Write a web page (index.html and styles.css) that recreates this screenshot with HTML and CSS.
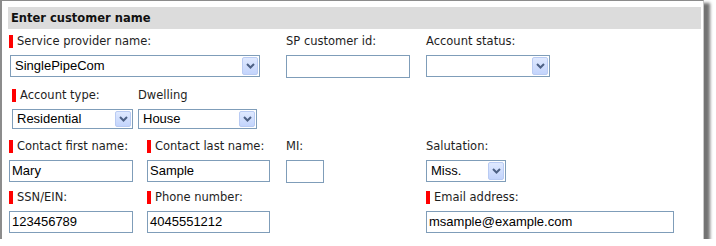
FILE: index.html
```html
<!doctype html>
<html lang="en">
  <head>
    <meta charset="UTF-8" />
    <title>Enter customer name</title>
    <link rel="stylesheet" href="styles.css">
  </head>
  <body>
    <div class="frame">
      <div class="section-title">Enter customer name</div>

      <div class="row row-first">
        <div class="field span-2">
          <div class="label"><span class="req"></span>Service provider name:</div>
          <div class="select w-250 nudge">
            <span class="value">SinglePipeCom</span>
            <span class="arrow"><svg width="9" height="6" viewBox="0 0 9 6"><path d="M1 1 L4.5 4.5 L8 1" fill="none" stroke="#4d6185" stroke-width="2"/></svg></span>
          </div>
        </div>
        <div class="field">
          <div class="label">SP customer id:</div>
          <div class="input w-124 tall"></div>
        </div>
        <div class="field">
          <div class="label">Account status:</div>
          <div class="select w-124">
            <span class="value"></span>
            <span class="arrow"><svg width="9" height="6" viewBox="0 0 9 6"><path d="M1 1 L4.5 4.5 L8 1" fill="none" stroke="#4d6185" stroke-width="2"/></svg></span>
          </div>
        </div>
      </div>

      <div class="row row-nested">
        <div class="field">
          <div class="label"><span class="req"></span>Account type:</div>
          <div class="select w-121 short">
            <span class="value">Residential</span>
            <span class="arrow"><svg width="9" height="6" viewBox="0 0 9 6"><path d="M1 1 L4.5 4.5 L8 1" fill="none" stroke="#4d6185" stroke-width="2"/></svg></span>
          </div>
        </div>
        <div class="field">
          <div class="label">Dwelling</div>
          <div class="select w-119 short">
            <span class="value">House</span>
            <span class="arrow"><svg width="9" height="6" viewBox="0 0 9 6"><path d="M1 1 L4.5 4.5 L8 1" fill="none" stroke="#4d6185" stroke-width="2"/></svg></span>
          </div>
        </div>
      </div>

      <div class="row">
        <div class="field">
          <div class="label"><span class="req"></span>Contact first name:</div>
          <div class="input w-124">Mary</div>
        </div>
        <div class="field">
          <div class="label"><span class="req"></span>Contact last name:</div>
          <div class="input w-123">Sample</div>
        </div>
        <div class="field">
          <div class="label">MI:</div>
          <div class="input w-38 tall"></div>
        </div>
        <div class="field">
          <div class="label">Salutation:</div>
          <div class="select w-80">
            <span class="value">Miss.</span>
            <span class="arrow"><svg width="9" height="6" viewBox="0 0 9 6"><path d="M1 1 L4.5 4.5 L8 1" fill="none" stroke="#4d6185" stroke-width="2"/></svg></span>
          </div>
        </div>
      </div>

      <div class="row">
        <div class="field">
          <div class="label"><span class="req"></span>SSN/EIN:</div>
          <div class="input w-124">123456789</div>
        </div>
        <div class="field">
          <div class="label"><span class="req"></span>Phone number:</div>
          <div class="input w-123">4045551212</div>
        </div>
        <div class="field"></div>
        <div class="field">
          <div class="label"><span class="req"></span>Email address:</div>
          <div class="input w-248">msample@example.com</div>
        </div>
      </div>

      <div class="torn"></div>
    </div>
  </body>
</html>
```

FILE: styles.css
```css
:root {
  --frame-border: #8c8c8c;
  --title-bg: #dcdcdc;
  --field-border: #7f9db9;
  --label-color: #1e1e1e;
  --required: #ff0000;
}

* {
  box-sizing: border-box;
  margin: 0;
  padding: 0;
}

body {
  background-color: #fff;
  font-family: "DejaVu Sans", Verdana, sans-serif;
}

.frame {
  width: 704px;
  height: 239px;
  padding: 6px 2px 0 6px;
  border-top: 1px solid var(--frame-border);
  border-left: 2px solid var(--frame-border);
  border-right: 1px solid #c8c8c8;
  box-shadow: 6px 3px 3px rgba(0, 0, 0, 0.55);
  background-color: #fff;
}

.section-title {
  height: 22px;
  padding-left: 3px;
  background-color: var(--title-bg);
  font-size: 11.5px;
  font-weight: bold;
  line-height: 22px;
  color: #111;
}

.row {
  display: grid;
  grid-template-columns: 138px 139px 140px 1fr;
  height: 51px;
  padding-left: 1px;
}

.row-first {
  height: 54px;
  margin-top: 5px;
}

.row-nested {
  grid-template-columns: 126px 126px 1fr;
  padding-left: 4px;
}

.span-2 {
  grid-column: span 2;
}

.label {
  display: flex;
  align-items: center;
  gap: 4px;
  height: 14px;
  margin-bottom: 7px;
  font-size: 11.5px;
  line-height: 14px;
  color: var(--label-color);
  white-space: nowrap;
}

.req {
  width: 4px;
  height: 13px;
  background-color: var(--required);
}

.input,
.select {
  height: 22px;
  border: 1px solid var(--field-border);
  background-color: #fff;
  font-family: "Liberation Sans", Arial, sans-serif;
  font-size: 13px;
  color: #000;
}

.input {
  padding-left: 2px;
  line-height: 20px;
}

.tall {
  height: 23px;
}

.select {
  display: flex;
  align-items: stretch;
  padding: 1px;
}

.short {
  height: 20px;
}

.nudge {
  margin-left: 1px;
}

.select .value {
  flex: 1;
  padding-left: 3px;
  line-height: 18px;
}

.short .value {
  line-height: 16px;
}

.arrow {
  display: flex;
  align-items: center;
  justify-content: center;
  width: 16px;
  border: 1px solid #b9cbf3;
  border-radius: 2px;
  background: linear-gradient(#dfe9ff, #c3d4fc);
}

.w-250 { width: 250px; }
.w-248 { width: 248px; }
.w-124 { width: 124px; }
.w-123 { width: 123px; }
.w-121 { width: 121px; }
.w-119 { width: 119px; }
.w-80 { width: 80px; }
.w-38 { width: 38px; }

.torn {
  height: 3px;
  margin: 3px -2px 0 -6px;
  border-bottom: 2px dotted #b4b4b4;
}
```
